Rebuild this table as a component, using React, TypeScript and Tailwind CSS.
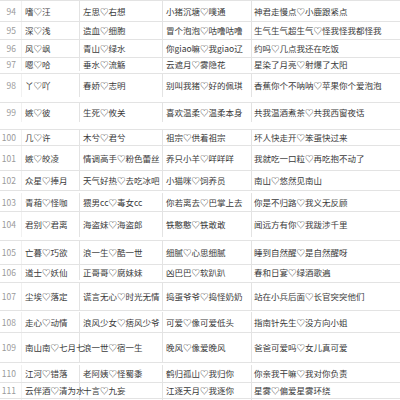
const rows: { n: number; cls: string; c: [string, string, string, string] }[] = [
  { n: 94, cls: "h-[21px]", c: ["嗜♡汪", "左思♡右想", "小猪沉塘♡噗通", "神君走慢点♡小鹿跟紧点"] },
  { n: 95, cls: "h-[18px]", c: ["深♡浅", "造血♡细胞", "冒个泡泡♡咕噜咕噜", "生气生气超生气♡怪我怪我都怪我"] },
  { n: 96, cls: "h-[18px]", c: ["风♡飒", "青山♡绿水", "你giao嘛♡我giao辽", "约吗♡几点我还在吃饭"] },
  { n: 97, cls: "h-[16px] pb-[2px]", c: ["嗯♡哈", "垂水♡流觞", "云遮月♡雾隐花", "星染了月亮♡射爆了太阳"] },
  { n: 98, cls: "h-[29px] pb-[5px]", c: ["丫♡吖", "春娇♡志明", "别叫我猪♡好的佩琪", "香蕉你个不呐呐♡苹果你个爱泡泡"] },
  { n: 99, cls: "h-[27px] pb-[7px]", c: ["嫉♡彼", "生死♡攸关", "喜欢温柔♡温柔本身", "共我温酒煮茶♡共我西窗夜话"] },
  { n: 100, cls: "h-[16px]", c: ["几♡许", "木兮♡君兮", "祖宗♡供着祖宗", "坏人快走开♡笨蛋快过来"] },
  { n: 101, cls: "h-[25px]", c: ["嫉♡皎凌", "情调高手♡粉色蕾丝", "养只小羊♡咩咩咩", "我就吃一口粒♡再吃抱不动了"] },
  { n: 102, cls: "h-[20px]", c: ["众星♡捧月", "天气好热♡去吃冰吧", "小猫咪♡饲养员", "南山♡悠然见南山"] },
  { n: 103, cls: "h-[21px] pt-[2px]", c: ["青葙♡怪咖", "猥男cc♡毒女cc", "你若离去♡巴掌上去", "你是不归路♡我义无反顾"] },
  { n: 104, cls: "h-[29px] pb-[3px]", c: ["君别♡君离", "海盗妹♡海盗郎", "铁憨憨♡铁敢敢", "闻远方有你♡我跋涉千里"] },
  { n: 105, cls: "h-[24px]", c: ["亡暮♡巧欲", "浪一生♡酷一世", "细腻♡心思细腻", "睡到自然醒♡是自然醒呀"] },
  { n: 106, cls: "h-[18px] pb-[2px]", c: ["道士♡妖仙", "正哥哥♡腐妹妹", "凶巴巴♡软趴趴", "春和日宴♡绿酒歌遍"] },
  { n: 107, cls: "h-[28px]", c: ["尘埃♡落定", "谎言无心♡时光无情", "捣蛋爷爷♡捣怪奶奶", "站在小兵后面♡长官突突他们"] },
  { n: 108, cls: "h-[22px] pt-[1px]", c: ["走心♡动情", "浪风少女♡痞风少爷", "可爱♡像可爱低头", "指南针先生♡没方向小姐"] },
  { n: 109, cls: "h-[30px]", c: ["南山南♡七月七", "浪一世♡宿一生", "晚风♡像爱晚风", "爸爸可爱吗♡女儿真可爱"] },
  { n: 110, cls: "h-[20px] pt-[2px]", c: ["江河♡错落", "老阿姨♡怪蜀黍", "鹤归孤山♡我归你", "你亲我干嘛♡我对你负责"] },
  { n: 111, cls: "h-[16px]", c: ["云伴酒♡清为水", "十言♡九妄", "江逐天月♡我逐你", "星雾♡偏爱星雾环绕"] },
];

export default function App() {
  return (
    <div
      className="w-[400px] h-[400px] overflow-hidden bg-white text-[8.5px] leading-none text-[#3a3a3a]"
      style={{ fontFamily: '"Noto Sans CJK SC", "Noto Sans", sans-serif' }}
    >
      {rows.map((r) => (
        <div
          key={r.n}
          className={`grid grid-cols-[22px_58px_83px_89px_1fr] border-t border-[#e3e3e3] box-border ${r.cls}`}
        >
          <div className="flex items-center justify-end pr-[5px] text-[#9a9a9a] border-r border-[#f1f1f1]">{r.n}</div>
          <div className="flex items-center pl-[3px] whitespace-nowrap overflow-visible border-r border-[#e3e3e3]">{r.c[0]}</div>
          <div className="flex items-center pl-[3px] whitespace-nowrap border-r border-[#e3e3e3]">{r.c[1]}</div>
          <div className="flex items-center pl-[3px] whitespace-nowrap border-r border-[#e3e3e3]">{r.c[2]}</div>
          <div className="flex items-center pl-[2px] whitespace-nowrap">{r.c[3]}</div>
        </div>
      ))}
      <div className="grid grid-cols-[22px_58px_83px_89px_1fr] border-t border-[#e3e3e3] h-[20px]">
        <div className="border-r border-[#f1f1f1]" />
        <div className="border-r border-[#e3e3e3]" />
        <div className="border-r border-[#e3e3e3]" />
        <div className="border-r border-[#e3e3e3]" />
        <div />
      </div>
    </div>
  );
}
